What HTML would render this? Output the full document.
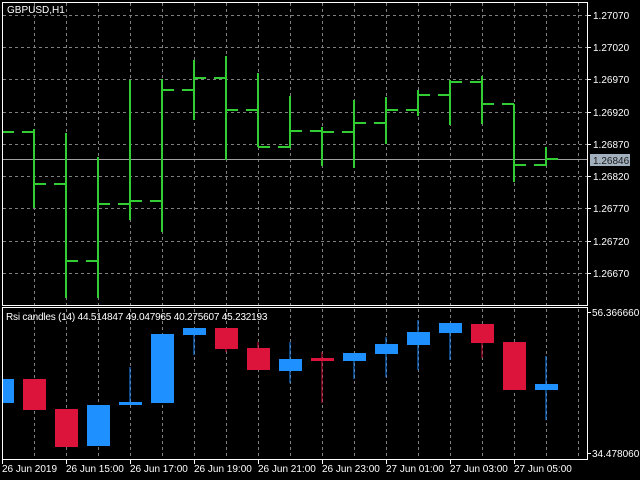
<!DOCTYPE html>
<html><head><meta charset="utf-8"><style>
html,body{margin:0;padding:0;background:#000;width:640px;height:480px;overflow:hidden}
svg{display:block}
text{font-family:"Liberation Sans",sans-serif;font-size:10px;fill:#fff}
</style></head><body>
<svg width="640" height="480" viewBox="0 0 640 480" xmlns="http://www.w3.org/2000/svg">
<rect width="640" height="480" fill="#000"/>
<g stroke="#808080" stroke-width="1" stroke-dasharray="3,3">
<path d="M34.5 3V305M66.5 3V305M98.5 3V305M130.5 3V305M162.5 3V305M194.5 3V305M226.5 3V305M258.5 3V305M290.5 3V305M322.5 3V305M354.5 3V305M386.5 3V305M418.5 3V305M450.5 3V305M482.5 3V305M514.5 3V305M546.5 3V305M578.5 3V305"/>
<path d="M34.5 309V459M66.5 309V459M98.5 309V459M130.5 309V459M162.5 309V459M194.5 309V459M226.5 309V459M258.5 309V459M290.5 309V459M322.5 309V459M354.5 309V459M386.5 309V459M418.5 309V459M450.5 309V459M482.5 309V459M514.5 309V459M546.5 309V459M578.5 309V459"/>
<path d="M3 15.5H587M3 47.5H587M3 79.5H587M3 112.5H587M3 144.5H587M3 176.5H587M3 208.5H587M3 241.5H587M3 273.5H587"/>
</g>
<path d="M3 159.5H587" stroke="#a0a0a0" stroke-width="1"/>
<rect x="2.5" y="2.5" width="585" height="303" fill="none" stroke="#fff"/>
<rect x="2.5" y="307.5" width="585" height="152" fill="none" stroke="#fff"/>
<g stroke="#fff">
<path d="M587 15.5H591M587 47.5H591M587 79.5H591M587 112.5H591M587 144.5H591M587 176.5H591M587 208.5H591M587 241.5H591M587 273.5H591M587 312.5H591M587 453.5H591"/>
<path d="M2.5 459V464M66.5 459V464M130.5 459V464M194.5 459V464M258.5 459V464M322.5 459V464M386.5 459V464M450.5 459V464M514.5 459V464"/>
</g>
<g stroke="#32cd32" stroke-width="2" fill="none">
<path d="M3 132H14M22 132H34M34 129V208M34 184H46"/>
<path d="M54 184H66M66 133V298M66 261H78"/>
<path d="M86 261H98M98 157V298M98 204H110"/>
<path d="M118 204H130M130 80V220M130 201H142"/>
<path d="M150 201H162M162 79V232M162 90H174"/>
<path d="M182 90H194M194 60V120M194 78H206"/>
<path d="M214 78H226M226 56V160M226 110H238"/>
<path d="M246 110H258M258 73V147M258 147H270"/>
<path d="M278 147H290M290 96V148M290 131H302"/>
<path d="M310 131H322M322 127V166M322 132H334"/>
<path d="M342 132H354M354 100V168M354 123H366"/>
<path d="M374 123H386M386 97V144M386 110H398"/>
<path d="M406 110H418M418 90V116M418 95H430"/>
<path d="M438 95H450M450 80V125M450 82H462"/>
<path d="M470 82H482M482 76V124M482 104H494"/>
<path d="M502 104H514M514 104V182M514 165H526"/>
<path d="M534 165H546M546 147V166M546 159H558"/>
</g>
<g fill="#1e90ff">
<rect x="3" y="379" width="11" height="24"/>
<rect x="87" y="405" width="23" height="41"/>
<rect x="129.5" y="367" width="1" height="36"/><rect x="119" y="402" width="23" height="3"/>
<rect x="151" y="334" width="23" height="69"/>
<rect x="193.5" y="330" width="1" height="25"/><rect x="183" y="328" width="23" height="7"/>
<rect x="289.5" y="342" width="1" height="41"/><rect x="279" y="359" width="23" height="12"/>
<rect x="353.5" y="355" width="1" height="24"/><rect x="343" y="353" width="23" height="8"/>
<rect x="385.5" y="337" width="1" height="40"/><rect x="375" y="344" width="23" height="10"/>
<rect x="417.5" y="320" width="1" height="50"/><rect x="407" y="332" width="23" height="13"/>
<rect x="449.5" y="323" width="1" height="37"/><rect x="439" y="323" width="23" height="10"/>
<rect x="545.5" y="356" width="1" height="64"/><rect x="535" y="384" width="23" height="6"/>
</g>
<g fill="#dc143c">
<rect x="23" y="379" width="23" height="31"/>
<rect x="55" y="409" width="23" height="38"/>
<rect x="225.5" y="328" width="1" height="24"/><rect x="215" y="328" width="23" height="21"/>
<rect x="257.5" y="342" width="1" height="28"/><rect x="247" y="348" width="23" height="22"/>
<rect x="321.5" y="352" width="1" height="51"/><rect x="311" y="358" width="23" height="3"/>
<rect x="481.5" y="324" width="1" height="34"/><rect x="471" y="324" width="23" height="19"/>
<rect x="503" y="342" width="23" height="48"/>
</g>
<text x="7" y="13">GBPUSD,H1</text>
<text x="6" y="320" style="letter-spacing:-0.2px">Rsi candles (14) 44.514847 49.047965 40.275607 45.232193</text>
<g>
<text x="593" y="19">1.27070</text>
<text x="593" y="51">1.27020</text>
<text x="593" y="83">1.26970</text>
<text x="593" y="116">1.26920</text>
<text x="593" y="148">1.26870</text>
<text x="593" y="180">1.26820</text>
<text x="593" y="212">1.26770</text>
<text x="593" y="245">1.26720</text>
<text x="593" y="277">1.26670</text>
</g>
<rect x="590" y="154" width="40" height="12" fill="#a3b1bf"/>
<text x="593" y="164" style="fill:#1a1a1a">1.26846</text>
<text x="592" y="316">56.366660</text>
<text x="592" y="457">34.478060</text>
<g>
<text x="2" y="472">26 Jun 2019</text>
<text x="66" y="472">26 Jun 15:00</text>
<text x="130" y="472">26 Jun 17:00</text>
<text x="194" y="472">26 Jun 19:00</text>
<text x="258" y="472">26 Jun 21:00</text>
<text x="322" y="472">26 Jun 23:00</text>
<text x="386" y="472">27 Jun 01:00</text>
<text x="450" y="472">27 Jun 03:00</text>
<text x="514" y="472">27 Jun 05:00</text>
</g>
</svg>
</body></html>
